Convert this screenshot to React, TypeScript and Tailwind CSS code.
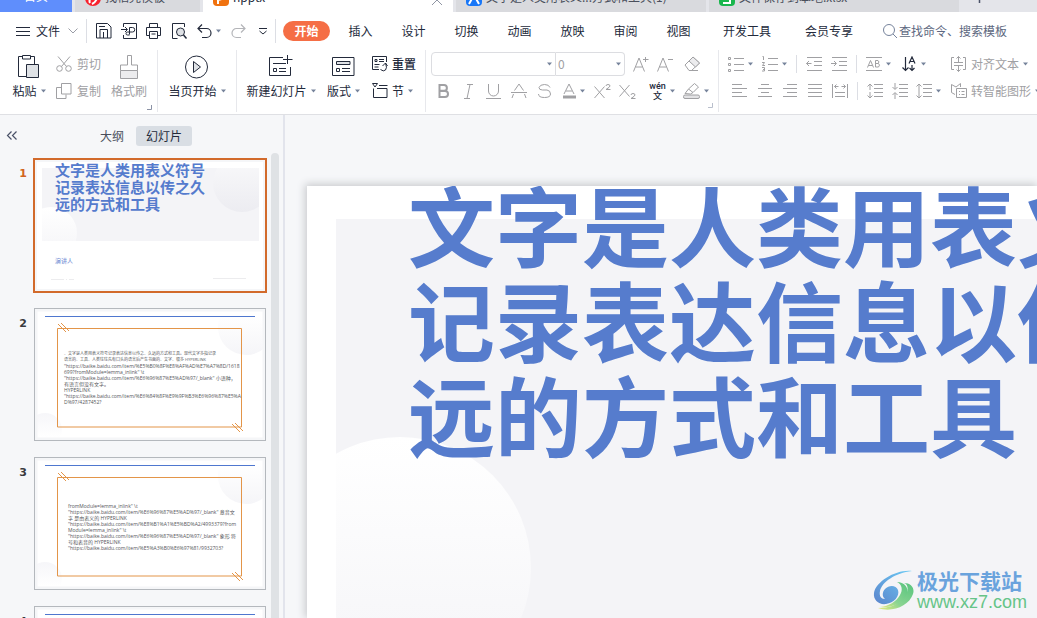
import React from 'react';
import clsx from 'clsx';

interface IconProps {
  w: number;
  h: number;
  children: React.ReactNode;
  className?: string;
}

const Icon: React.FC<IconProps> = ({ w, h, children, className }) => (
  <svg
    width={w}
    height={h}
    viewBox={`0 0 ${w} ${h}`}
    fill="none"
    stroke="currentColor"
    strokeWidth="1"
    aria-hidden="true"
    className={clsx('shrink-0', className)}
  >
    {children}
  </svg>
);

const Caret = () => (
  <svg width="5" height="4" viewBox="0 0 5 4" aria-hidden="true" className="shrink-0 text-[#76839b]">
    <path d="M0 0.5h5L2.5 3.5z" fill="currentColor" />
  </svg>
);

interface ToolProps {
  label: string;
  children: React.ReactNode;
  className?: string;
  caret?: boolean;
  dark?: boolean;
}

const Tool: React.FC<ToolProps> = ({ label, children, className, caret, dark }) => (
  <button
    type="button"
    aria-label={label}
    className={clsx('flex shrink-0 items-center gap-1 whitespace-nowrap', dark ? 'text-[#232a3b]' : 'text-[#a0a0a3]', className)}
  >
    {children}
    {caret && <Caret />}
  </button>
);

const Divider = () => <div className="h-[62px] w-px shrink-0 self-start bg-[#e7e8ec]" />;

const Corner: React.FC<{ className?: string }> = ({ className }) => (
  <Icon w={5} h={5} className={className}>
    <path d="M4.5 0v4.5H0" />
  </Icon>
);

/* ---------- tab strip ---------- */

const fileTabs = [
  { name: '找稻壳模板', width: 'w-[125px]', mark: 'bg-[#f8232f]', kind: 'docer' },
  { name: 'npptx', width: 'w-[250px]', mark: 'bg-[#f0720f]', kind: 'ppt' },
  { name: '文字是人类用表义...方式和工具(1)', width: 'w-[250px]', mark: 'bg-[#1877f8]', kind: 'doc' },
  { name: '文件保存到本地.xlsx', width: 'w-[250px]', mark: 'bg-[#18b64c]', kind: 'xls' },
];

const markPaths: Record<string, string> = {
  docer: 'M5 13c-2-4 3-7 5-6 3 1 1 5-3 7',
  ppt: 'M5 14V5h5q2 4-5 5',
  doc: 'M3 14l5-9 5 9',
  xls: 'M11 5H5v4h6v4H4',
};

const TabStrip = () => (
  <nav aria-label="文档" className="flex h-3 items-end gap-[3px] overflow-hidden bg-[#e4e5ea] text-xs leading-[18px]">
    <button type="button" className="h-7 w-[72px] shrink-0 bg-[#5f8efc] pb-[4px] text-white">
      首页
    </button>
    {fileTabs.map((tab) => {
      const active = tab.kind === 'ppt';
      return (
        <button
          key={tab.kind}
          type="button"
          className={clsx(
            'flex h-7 shrink-0 items-end gap-1 pb-[6px] pl-[10px]',
            tab.width,
            active ? 'bg-white text-[#232a3b]' : 'bg-[#d9dade] text-[#4a4f5c]',
          )}
        >
          <svg
            width="16"
            height="16"
            viewBox="0 0 16 16"
            fill="none"
            stroke="#fff"
            strokeWidth="2"
            aria-hidden="true"
            className={clsx('shrink-0', tab.mark, tab.kind === 'docer' ? 'rounded-full' : 'rounded-sm')}
          >
            <path d={markPaths[tab.kind]} />
          </svg>
          <span className="whitespace-nowrap">{tab.name}</span>
          {active && (
            <Icon w={12} h={12} className="mr-[10px] ml-auto text-[#8f95a3]">
              <path d="M1 1l10 10M11 1L1 11" />
            </Icon>
          )}
        </button>
      );
    })}
    <button type="button" aria-label="新建" className="ml-3 h-7 shrink-0 text-[#4a5268]">
      <Icon w={11} h={13}>
        <path d="M5.5 0v11M0 5.5h11" strokeWidth="1.5" />
      </Icon>
    </button>
  </nav>
);

/* ---------- menu row ---------- */

const menuTabs = ['插入', '设计', '切换', '动画', '放映', '审阅', '视图'];

const MenuRow = () => (
  <div className="flex h-[38px] items-center pl-4 text-xs text-[#232a3b]">
    <button type="button" className="flex shrink-0 items-center">
      <Icon w={14} h={11}>
        <path d="M0 1.5h14M0 5.5h14M0 9.5h14" />
      </Icon>
      <span className="ml-[6px] whitespace-nowrap">文件</span>
      <Icon w={10} h={6} className="ml-2 text-[#9a9da6]">
        <path d="M0.5 0.5L5 5l4.5-4.5" />
      </Icon>
    </button>
    <div className="ml-2 h-6 w-px shrink-0 bg-[#dcdee4]" />
    <Tool label="保存" dark className="ml-[9px]">
      <Icon w={16} h={16}>
        <path d="M0.5 0.5h11l3.5 3.5v11H0.500zM4 15V6.500h7.500V15M7.500 9v6M3 3.500h6" />
      </Icon>
    </Tool>
    <Tool label="输出为PDF" dark className="ml-[9px]">
      <Icon w={16} h={16}>
        <path d="M2.5 4V0.5h13v15h-13V12M0 6.5h6M4 4l2.500 2.500L4 9M8.500 11.500V4.500h3a2 2 0 0 1 0 4.500H6.500a1.500 1.500 0 0 0 0 3h2" />
      </Icon>
    </Tool>
    <Tool label="打印" dark className="ml-[9px]">
      <Icon w={16} h={16}>
        <path d="M3.5 4V0.5h8V4M3 12.5H0.5v-8h14v8H12M3.5 8.5h8v7h-8zM5.500 11h4" />
      </Icon>
    </Tool>
    <Tool label="打印预览" dark className="ml-[10px]">
      <Icon w={16} h={16}>
        <path d="M12.5 4V0.5H0.5v15h5" />
        <circle cx="8.5" cy="9" r="4" fill="#dfe2e6" />
        <path d="M11.5 12l3 3.5" strokeWidth="1.5" />
      </Icon>
    </Tool>
    <Tool label="撤销" dark caret className="ml-[9px]">
      <Icon w={15} h={15}>
        <path d="M5 0.5L1 4.5l4 4M1 4.5h8.500a4 4 0 0 1 0 9H5" strokeWidth="1.2" />
      </Icon>
    </Tool>
    <Tool label="恢复" className="ml-[10px]">
      <Icon w={15} h={15} className="text-[#b3b4b8]">
        <path d="M10 0.5l4 4-4 4M14 4.5H5.500a4 4 0 0 0 0 9H10" strokeWidth="1.2" />
      </Icon>
    </Tool>
    <Tool label="自定义快速访问工具栏" dark className="ml-[13px]">
      <Icon w={8} h={7}>
        <path d="M0 0.5h8M0.5 3L4 6l3.5-3" />
      </Icon>
    </Tool>
    <div className="ml-2 h-6 w-px shrink-0 bg-[#dcdee4]" />
    <button type="button" className="ml-[7px] h-5 w-[47px] shrink-0 rounded-full bg-[#f56e45] font-bold text-white">
      开始
    </button>
    <div className="ml-1 flex shrink-0">
      {menuTabs.map((name) => (
        <button key={name} type="button" className="w-[53px]">
          {name}
        </button>
      ))}
    </div>
    <button type="button" className="w-[84px] shrink-0">
      开发工具
    </button>
    <button type="button" className="w-20 shrink-0">
      会员专享
    </button>
    <button type="button" className="ml-[14px] flex shrink-0 items-center gap-[2px] text-[#5c6780]">
      <Icon w={14} h={14} className="text-[#76839b]">
        <circle cx="6" cy="6" r="5.5" />
        <path d="M10 10l4 4" />
      </Icon>
      <span className="whitespace-nowrap">查找命令、搜索模板</span>
    </button>
  </div>
);

/* ---------- ribbon ---------- */

const ClipboardGroup = () => (
  <div className="flex w-[157px] shrink-0 items-start pl-3 text-xs">
    <button type="button" className="flex w-[34px] flex-col items-center text-[#232a3b]">
      <Icon w={22} h={24} className="mt-[5px]">
        <path d="M4.5 1.500h-4v20h8M12.5 1.500h4V9M4.5 0.5h8V4h-8z" />
        <path d="M8.5 9.5h12v13h-12z" fill="#dfe2e6" />
      </Icon>
      <span className="mt-1 flex items-center gap-1 whitespace-nowrap leading-4">
        粘贴
        <Caret />
      </span>
    </button>
    <div className="ml-[10px] flex flex-col">
      <Tool label="剪切" className="h-7">
        <Icon w={17} h={16}>
          <circle cx="3.5" cy="12.5" r="2.8" />
          <circle cx="12.5" cy="12.5" r="2.8" />
          <path d="M2 0.5l8.500 10M14 0.5L5.500 10.500" />
        </Icon>
        剪切
      </Tool>
      <Tool label="复制" className="h-[26px]">
        <Icon w={17} h={16}>
          <path d="M5.5 0.5H15v10.500H5.500zM5 4.500H0.500v11h9.500V11.500" />
        </Icon>
        复制
      </Tool>
    </div>
    <button type="button" className="ml-[7px] flex w-[42px] flex-col items-center text-[#a0a0a3]">
      <Icon w={19} h={24} className="mt-[5px]">
        <path d="M7.5 0.5h4V10h6v5.500H0.500V10h7z" />
        <path d="M0.5 15.5h17v8h-17z" fill="#ececee" />
      </Icon>
      <span className="mt-1 whitespace-nowrap leading-4">格式刷</span>
    </button>
    <Corner className="mt-[55px] -ml-[3px] text-[#8b92a5]" />
  </div>
);

const PlayGroup = () => (
  <div className="flex w-[78px] shrink-0 justify-center text-xs text-[#232a3b]">
    <button type="button" className="flex flex-col items-center">
      <Icon w={23} h={24} className="mt-[5px]">
        <circle cx="11.5" cy="12" r="11" />
        <path d="M8.5 6.5v11l7-5.500z" fill="#dfe2e6" />
      </Icon>
      <span className="mt-1 flex items-center gap-1 whitespace-nowrap leading-4">
        当页开始
        <Caret />
      </span>
    </button>
  </div>
);

const SlidesGroup = () => (
  <div className="flex w-[188px] shrink-0 items-start pl-[10px] text-xs text-[#232a3b]">
    <button type="button" className="flex w-[68px] flex-col items-center">
      <Icon w={24} h={24} className="mt-[5px]">
        <path d="M14 2.500H0.500v18h21V12M18.500 0v9M14 4.500h9.500M4 8.500h13M4.500 13.500h3v3h-3zM10 13.500h7M10 16.500h7" />
      </Icon>
      <span className="mt-1 flex items-center gap-1 whitespace-nowrap leading-4">
        新建幻灯片
        <Caret />
      </span>
    </button>
    <button type="button" className="ml-3 flex w-[33px] flex-col items-center">
      <Icon w={23} h={24} className="mt-[5px]">
        <path d="M0.5 2.5H22v18H0.500z" />
        <path d="M4.5 6.5H18v3H4.500z" fill="#dfe2e6" />
        <path d="M4.5 13.5h3v3h-3zM10 13.5h8M10 16.5h8" />
      </Icon>
      <span className="mt-1 flex items-center gap-1 whitespace-nowrap leading-4">
        版式
        <Caret />
      </span>
    </button>
    <div className="ml-3 flex flex-col">
      <Tool label="重置" dark className="h-7">
        <Icon w={16} h={16}>
          <path d="M14.5 6V0.5h-14v13H7M3 3.5h2v2H3zM7 3.5h5M7 5.5h5M2.500 8.500h5M2.500 11h4M8.500 13.500q3 2.500 5 0.500t0-7M10.500 10l3-3 2 3" />
        </Icon>
        <span className="font-medium">重置</span>
      </Tool>
      <Tool label="节" dark caret className="h-[26px]">
        <Icon w={16} h={16}>
          <path d="M0.5 0.5h5L3 4zM7 2.5h8.500M1.500 5.500v9h13.500v-9H5" />
        </Icon>
        节
      </Tool>
    </div>
  </div>
);

const FontGroup = () => (
  <div className="flex w-[292px] shrink-0 flex-col pl-[5px]">
    <div className="flex h-7 items-center">
      <label className="flex h-6 w-[125px] items-center justify-between rounded-l-sm border border-[#dcdde1] pr-[3px]">
        <input type="text" aria-label="字体" className="w-[100px] outline-none" />
        <Caret />
      </label>
      <label className="flex h-6 w-[69px] items-center justify-between rounded-r-sm border border-l-0 border-[#dcdde1] pr-[3px] pl-[2px]">
        <input type="text" aria-label="字号" defaultValue="0" className="w-10 text-xs text-[#a0a0a3] outline-none" />
        <Caret />
      </label>
      <Tool label="增大字号" className="ml-[8px]">
        <Icon w={16} h={17}>
          <path d="M0.5 15.5L6 2l5.500 13.500M2.500 11h7M10 3.500h5.500M12.500 1v5" />
        </Icon>
      </Tool>
      <Tool label="减小字号" className="ml-[8px]">
        <Icon w={16} h={17}>
          <path d="M0.5 15.5L6 2l5.500 13.500M2.500 11h7M11 3.500h5" />
        </Icon>
      </Tool>
      <Tool label="清除格式" className="ml-[11px]">
        <Icon w={17} h={16}>
          <path d="M1 9L9 1l6.500 6-8 7.500H5z" />
          <path d="M5 5l4-4 6.500 6-4 4z" fill="#ececee" />
          <path d="M5 14.500h9" />
        </Icon>
      </Tool>
    </div>
    <div className="flex h-[26px] items-center">
      <Tool label="加粗" className="ml-[7px]">
        <Icon w={11} h={14}>
          <path d="M1.500 1H6a2.800 2.800 0 0 1 0 5.800H1.500zM1.500 7H7a3 3 0 0 1 0 6H1.500z" strokeWidth="2" />
        </Icon>
      </Tool>
      <Tool label="倾斜" className="ml-[15px]">
        <Icon w={9} h={15}>
          <path d="M3 0.500h6M0 14.500h6M6 0.500l-3 14" />
        </Icon>
      </Tool>
      <Tool label="下划线" className="ml-[13px]">
        <Icon w={15} h={17}>
          <path d="M2.500 1v7a5 5 0 0 0 10 0V1M0 15.500h15" />
        </Icon>
      </Tool>
      <Tool label="着重号" className="ml-[10px]">
        <Icon w={16} h={16}>
          <path d="M0 9.500h16M3.500 7.500L8 1l4.500 6.500M2.500 11L1 15M13.500 11l1.500 4" />
        </Icon>
      </Tool>
      <Tool label="删除线" className="ml-[11px]">
        <Icon w={13} h={14}>
          <path d="M12 3.500Q11 0.500 6.500 0.500T1 3.500q0 2.500 3.500 2.500H9q3.500 0.500 3.500 4t-6 3.500T0.500 10" />
        </Icon>
      </Tool>
      <Tool label="字体颜色" caret className="ml-[11px]">
        <Icon w={14} h={16}>
          <path d="M2 11L7 1l5 10M4 8h6" />
          <path d="M1 14h13" strokeWidth="3" />
        </Icon>
      </Tool>
      <Tool label="上标" className="ml-[9px]">
        <Icon w={17} h={15}>
          <path d="M0.500 2.500l10 11.500M10.500 2.500L0.500 14M12 2q0-1.500 2-1.500T16 2q0 1-4 3.500h4.500" />
        </Icon>
      </Tool>
      <Tool label="下标" className="ml-[8px]">
        <Icon w={17} h={15}>
          <path d="M0.500 1l10 11.500M10.500 1L0.500 12.500M12 11q0-1.500 2-1.500t2 1.500q0 1-4 3.500h4.500" />
        </Icon>
      </Tool>
      <Tool label="拼音指南" dark caret className="ml-[13px]">
        <span className="flex w-[17px] flex-col items-center text-[9px] leading-[9px] font-medium">
          <span className="font-['Roboto',sans-serif]">wén</span>
          <span>文</span>
        </span>
      </Tool>
      <Tool label="突出显示" caret className="ml-[8px]">
        <Icon w={17} h={16}>
          <path d="M2 10.500L5.500 6 10 9.500 7.500 11zM5.500 6l6-5.500 4 3.500L10 9.500" />
          <rect x="0.500" y="12" width="16" height="3.500" rx="1.500" fill="#e2e2e4" />
        </Icon>
      </Tool>
    </div>
    <Corner className="-mt-px mr-[5px] ml-auto text-[#b9bfcc]" />
  </div>
);

const ParagraphGroup = () => (
  <div className="flex shrink-0 flex-col pl-[9px] text-xs">
    <div className="flex h-7 items-center">
      <Tool label="项目符号" caret>
        <Icon w={16} h={16}>
          <path d="M6 2.500h10M6 8.500h10M6 14.500h10M0.500 1.500h2v2h-2zM0.500 7.500h2v2h-2zM0.500 13.500h2v2h-2z" />
        </Icon>
      </Tool>
      <Tool label="编号" caret className="ml-[9px]">
        <Icon w={16} h={16}>
          <path d="M6 2.500h10M6 8.500h10M6 14.500h10M0.500 0.500h1v3.500M0 6.500h2.500l-2 3H3M0 11.500h2.500v3.500H0M1 13.500h1.500" />
        </Icon>
      </Tool>
      <div className="mx-[9px] h-[18px] w-px bg-[#dcdee4]" />
      <Tool label="减少缩进量">
        <Icon w={16} h={14}>
          <path d="M1 0.500h15M8 4.500h8M8 8.500h8M1 13.500h15M0.500 6.500h5M3 4L0.500 6.500 3 9" />
        </Icon>
      </Tool>
      <Tool label="增加缩进量" className="ml-[9px]">
        <Icon w={16} h={14}>
          <path d="M1 0.500h15M8 4.500h8M8 8.500h8M1 13.500h15M0 6.500h5M3 4l2.500 2.500L3 9" />
        </Icon>
      </Tool>
      <div className="mx-[9px] h-[18px] w-px bg-[#dcdee4]" />
      <Tool label="字符边框" caret>
        <Icon w={16} h={14}>
          <path d="M0 0.500h16M0 13.500h16M1.500 10.500l3-7 3 7M2.500 8.500h4M9.500 3.500H12q2 1.500 0 3H9.500h3q2 1.500 0 3.500h-3z" />
        </Icon>
      </Tool>
      <Tool label="文字方向" dark caret className="ml-[11px]">
        <Icon w={15} h={16}>
          <path d="M3.500 1v13M0.500 11.500l3 3 3-3M7 7.500L10 1l3 6.500M8 5.500h4M10 9v5.500M7.500 12l2.500 2.500 2.500-2.500" strokeWidth="1.2" />
        </Icon>
      </Tool>
      <Tool label="对齐文本" caret className="ml-[25px]">
        <Icon w={16} h={16}>
          <path d="M3 1.500H0.500v12H3M12 1.500h2.500v12H12M3 6.500h9M3 9.500h9M7.500 6V0.500M5.500 2.500l2-2 2 2M7.500 10v5.500M5.500 13.500l2 2 2-2" />
        </Icon>
        对齐文本
      </Tool>
    </div>
    <div className="flex h-[26px] items-center">
      <Tool label="左对齐" className="ml-[4px]">
        <Icon w={15} h={14}>
          <path d="M0 0.500h10M0 4.500h15M0 8.500h10M0 12.500h15" />
        </Icon>
      </Tool>
      <Tool label="居中对齐" className="ml-[11px]">
        <Icon w={14} h={14}>
          <path d="M3 0.500h8M0 4.500h14M3 8.500h8M0 12.500h14" />
        </Icon>
      </Tool>
      <Tool label="右对齐" className="ml-[11px]">
        <Icon w={14} h={14}>
          <path d="M4 0.500h10M0 4.500h14M4 8.500h10M0 12.500h14" />
        </Icon>
      </Tool>
      <Tool label="两端对齐" className="ml-[11px]">
        <Icon w={14} h={14}>
          <path d="M0 0.500h14M0 4.500h14M0 8.500h14M0 12.500h14" />
        </Icon>
      </Tool>
      <Tool label="分散对齐" className="ml-[10px]">
        <Icon w={16} h={14}>
          <path d="M0.500 0v14M15.500 0v14M2.500 2.500h4M9.500 2.500h4M4.500 0.500l-2 2 2 2M11.500 0.500l2 2-2 2M3 8.500h10M3 12.500h10" />
        </Icon>
      </Tool>
      <div className="mx-[9px] h-[18px] w-px bg-[#dcdee4]" />
      <Tool label="增大段落间距">
        <Icon w={17} h={16}>
          <path d="M7 1.500h9M7 5.500h9M7 9.500h9M7 13.500h9M3 7V1M0.500 3.500L3 1l2.500 2.500M3 9v6M0.500 12.500L3 15l2.500-2.500" />
        </Icon>
      </Tool>
      <Tool label="减小段落间距" className="ml-[8px]">
        <Icon w={17} h={16}>
          <path d="M7 1.500h9M7 5.500h9M7 9.500h9M7 13.500h9M3 0v6M0.500 4L3 6.500 5.500 4M3 16v-6M0.500 12L3 9.500 5.500 12" />
        </Icon>
      </Tool>
      <Tool label="行距" caret className="ml-[7px]">
        <Icon w={16} h={16}>
          <path d="M7 1.500h9M7 5.500h9M7 9.500h9M7 13.500h9M3 1v14M0.500 3.500L3 1l2.500 2.500M0.500 12.500L3 15l2.500-2.500" />
        </Icon>
      </Tool>
      <Tool label="转智能图形" caret className="ml-[10px]">
        <Icon w={16} h={16}>
          <path d="M4 11.500L0.500 9.500v-8L5 4l4.500-3.500v3.500M5.500 5.500h10v9h-10zM8 8.500h1M10.500 8.500h3M8 11.500h1M10.500 11.500h3" />
        </Icon>
        转智能图形
      </Tool>
    </div>
  </div>
);

const Ribbon = () => (
  <div className="flex h-[64px] overflow-hidden">
    <ClipboardGroup />
    <Divider />
    <PlayGroup />
    <Divider />
    <SlidesGroup />
    <Divider />
    <FontGroup />
    <Divider />
    <ParagraphGroup />
  </div>
);

/* ---------- slide panel ---------- */

interface BodySlide {
  id: number;
  pad: string;
  intro: string[];
  lines: string[];
}

const bodySlides: BodySlide[] = [
  {
    id: 2,
    pad: 'pl-[29px] pt-[42px]',
    intro: [
      '、文字是人类用表义符号记录表达信息以传之、久远的方式和工具。现代文字多指记录',
      '语言的、工具、人类往往先有口头的语言后产生书面的、文字、很多 HYPERLINK',
    ],
    lines: [
      '"https://baike.baidu.com/item/%E5%B0%8F%E8%AF%AD%E7%A7%8D/1618',
      '699?fromModule=lemma_inlink" \\t',
      '"https://baike.baidu.com/item/%E6%96%87%E5%AD%97/_blank" 小语种，',
      '有语言但没有文字。',
      'HYPERLINK',
      '"https://baike.baidu.com/item/%E6%84%8F%E9%9F%B3%E6%96%87%E5%A',
      'D%97/4287452?',
    ],
  },
  {
    id: 3,
    pad: 'pl-[33px] pt-[45px]',
    intro: [],
    lines: [
      'fromModule=lemma_inlink" \\t',
      '"https://baike.baidu.com/item/%E6%96%87%E5%AD%97/_blank" 意音文',
      '字 是由表义的 HYPERLINK',
      '"https://baike.baidu.com/item/%E8%B1%A1%E5%BD%A2/4993379?from',
      'Module=lemma_inlink" \\t',
      '"https://baike.baidu.com/item/%E6%96%87%E5%AD%97/_blank" 象形 符',
      '号和表音的 HYPERLINK',
      '"https://baike.baidu.com/item/%E5%A3%B0%E6%97%81/9932703?',
    ],
  },
  { id: 4, pad: 'pl-[33px] pt-[45px]', intro: [], lines: [] },
];

const CoverThumb = () => (
  <button type="button" className="relative h-[135px] w-[234px] overflow-hidden border-2 border-[#d26a2b] bg-white text-left">
    <svg viewBox="0 0 230 131" aria-hidden="true" className="absolute inset-0 h-full w-full">
      <defs>
        <linearGradient id="cover-a" x1="0" y1="0" x2="0" y2="1">
          <stop offset="0" stopColor="#fafafb" />
          <stop offset="1" stopColor="#ececf1" />
        </linearGradient>
        <linearGradient id="cover-b" x1="0" y1="0" x2="0" y2="1">
          <stop offset="0" stopColor="#fff" />
          <stop offset="1" stopColor="#f4f4f7" />
        </linearGradient>
        <clipPath id="cover-clip">
          <path d="M7 8h217v73H7z" />
        </clipPath>
      </defs>
      <path d="M0.5 0.5h229v130H0.500z" stroke="#f5f6f8" strokeWidth="3" fill="none" />
      <path d="M7 8h217v73H7z" fill="#f4f4f7" />
      <g clipPath="url(#cover-clip)">
        <circle cx="207" cy="23" r="29" fill="url(#cover-a)" />
        <circle cx="16" cy="73" r="26" fill="url(#cover-b)" />
      </g>
      <path d="M16 119.500h13M31 119.500h1M34 119.500h5M178 118.500h33" stroke="#ececee" />
    </svg>
    <span className="relative flex h-full flex-col pt-px pl-5 text-[#557bcd]">
      <span className="text-[15px] leading-[17px] font-bold whitespace-nowrap">
        文字是人类用表义符号
        <br />
        记录表达信息以传之久
        <br />
        远的方式和工具
      </span>
      <span className="mt-[45px] text-[6px] leading-[8px] font-medium text-[#7f9ad8]">演讲人</span>
    </span>
  </button>
);

const BodyThumb: React.FC<{ slide: BodySlide }> = ({ slide }) => (
  <button
    type="button"
    className="relative ml-px flex h-[133px] w-[232px] items-start overflow-hidden border border-[#b4b8bd] bg-white text-left"
  >
    <svg viewBox="0 0 230 131" aria-hidden="true" className="absolute inset-0 h-full w-full" fill="none">
      <defs>
        <linearGradient id="body-a" x1="0" y1="0" x2="0" y2="1">
          <stop offset="0.3" stopColor="#fff" />
          <stop offset="1" stopColor="#f5f5f8" />
        </linearGradient>
        <linearGradient id="body-b" x1="0" y1="0" x2="0" y2="1">
          <stop offset="0" stopColor="#f6f6f9" />
          <stop offset="0.7" stopColor="#fff" />
        </linearGradient>
      </defs>
      <circle cx="211" cy="18" r="28" fill="url(#body-a)" />
      <circle cx="10" cy="121" r="17" fill="url(#body-b)" />
      <path d="M1 1h228v129H1z" stroke="#f5f6f8" strokeWidth="3" />
      <path d="M10 7.500h210" stroke="#4f77cf" />
      <path d="M22.500 19.500h184v98.500h-184z" stroke="#e39549" />
      <path d="M23 15l8 8M26 14l8 8M197 115l8 8M200 114l8 8" stroke="#e39549" />
    </svg>
    <span
      className={clsx(
        "relative font-['Open_Sans','Noto_Sans_CJK_SC',sans-serif] leading-[6px] whitespace-nowrap text-[#55565a]",
        slide.pad,
      )}
    >
      {slide.intro.map((line, i) => (
        <span key={i} className="block text-[4px]">
          {line}
        </span>
      ))}
      {slide.lines.map((line, i) => (
        <span key={i} className="block text-[5px]">
          {line}
        </span>
      ))}
    </span>
  </button>
);

const SlidePanel = () => (
  <aside className="flex w-[285px] shrink-0 flex-col border-r-2 border-[#e2e4ec]">
    <div className="flex h-[38px] shrink-0 items-center pt-[3px] pl-[6px] text-xs text-[#4a4f5c]">
      <button type="button" aria-label="收起" className="text-[#4a5268]">
        <Icon w={12} h={9}>
          <path d="M5.500 0.500l-4 4 4 4M10.500 0.500l-4 4 4 4" strokeWidth="1.2" />
        </Icon>
      </button>
      <button type="button" className="ml-[70px] w-12 shrink-0">
        大纲
      </button>
      <button type="button" className="h-5 w-14 shrink-0 rounded-[3px] bg-[#d9dee4] text-[#232a3b]">
        幻灯片
      </button>
    </div>
    <div className="flex min-h-0 flex-1">
      <ol className="flex min-w-0 flex-1 flex-col gap-4 overflow-hidden pt-[5px] text-[11px]">
        <li className="-mb-px flex">
          <span className="w-[33px] shrink-0 pt-2 pr-[6px] text-right font-['DejaVu_Sans',sans-serif] font-bold text-[#d2651f]">1</span>
          <CoverThumb />
        </li>
        {bodySlides.map((slide) => (
          <li key={slide.id} className="flex">
            <span className="w-[33px] shrink-0 pt-2 pr-[6px] text-right font-['DejaVu_Sans',sans-serif] font-bold text-[#3a3a3e]">
              {slide.id}
            </span>
            <BodyThumb slide={slide} />
          </li>
        ))}
      </ol>
      <div className="mr-1 w-2 shrink-0 rounded-t-full bg-[#dfe2e5]" />
    </div>
  </aside>
);

/* ---------- canvas ---------- */

const Watermark = () => (
  <div className="absolute right-[10px] bottom-[6px] flex items-center gap-[2px]">
    <svg width="42" height="42" viewBox="0 0 42 42" aria-hidden="true">
      <defs>
        <linearGradient id="wm-blue" x1="1" y1="0" x2="0" y2="1">
          <stop offset="0" stopColor="#6ccbf5" />
          <stop offset="1" stopColor="#5b84cc" />
        </linearGradient>
        <linearGradient id="wm-green" x1="1" y1="0" x2="0" y2="1">
          <stop offset="0" stopColor="#58c47e" />
          <stop offset="0.6" stopColor="#8ad492" />
          <stop offset="1" stopColor="#e9ec7c" />
        </linearGradient>
      </defs>
      <path
        d="M39 2C24 0 3 12 1 24c-1 7 5 12 12 11 8-1 14-8 12-14-2-5-9-5-13-1-3 3-3 8 0 10-4 0-6-3-5-8C9 13 22 4 39 2z"
        fill="url(#wm-blue)"
      />
      <path d="M31 14c6 2 4 11-2 17-5 5-13 8-24 8 14 5 31-2 35-14 2-6-2-11-9-11z" fill="url(#wm-green)" />
      <path d="M24 13c5 2 6 8 3 13-4 7-11 11-20 12 12 1 24-4 27-13 2-7-3-12-10-12z" fill="url(#wm-green)" />
    </svg>
    <div className="flex flex-col whitespace-nowrap">
      <span className="text-[21px] leading-[24px] font-bold text-[#6aa3dd]">极光下载站</span>
      <a href="#" className="font-['Liberation_Sans',sans-serif] text-[18px] leading-[20px] text-[#66c488]">
        www.xz7.com
      </a>
    </div>
  </div>
);

const Canvas = () => (
  <main className="relative min-w-0 flex-1 overflow-hidden pt-[71px] pl-[22px]">
    <section className="h-full bg-white shadow-[-1px_-1px_8px_1px_#c8cacd]">
      <div className="relative h-full overflow-hidden">
        <div className="absolute top-[33px] right-0 bottom-0 left-[29px] overflow-hidden bg-[#f4f4f7]">
          <div className="absolute top-[218px] -left-[67px] h-[262px] w-[262px] rounded-full bg-linear-to-b from-white to-[#f4f4f7]" />
        </div>
        <h1 className="relative -mt-[10px] pl-[101px] text-[87px] leading-[95px] font-bold whitespace-nowrap text-[#567ccd]">
          文字是人类用表义符号
          <br />
          记录表达信息以传之久
          <br />
          远的方式和工具
        </h1>
      </div>
    </section>
    <Watermark />
  </main>
);

export default function App() {
  return (
    <div className="flex h-screen flex-col overflow-hidden bg-[#f6f7f9] font-['Noto_Sans_CJK_SC',sans-serif]">
      <header className="shrink-0 border-b border-[#dfe0e4] bg-white">
        <TabStrip />
        <MenuRow />
        <Ribbon />
      </header>
      <div className="flex min-h-0 flex-1">
        <SlidePanel />
        <Canvas />
      </div>
    </div>
  );
}
